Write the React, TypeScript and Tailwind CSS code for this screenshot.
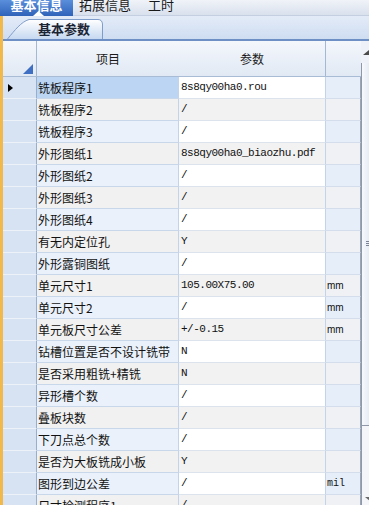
import type { ReactNode } from 'react'

type Row = { item: string; value: string; unit?: string }

const rows: Row[] = [
  { item: '铣板程序1', value: '8s8qy00ha0.rou' },
  { item: '铣板程序2', value: '/' },
  { item: '铣板程序3', value: '/' },
  { item: '外形图纸1', value: '8s8qy00ha0_biaozhu.pdf' },
  { item: '外形图纸2', value: '/' },
  { item: '外形图纸3', value: '/' },
  { item: '外形图纸4', value: '/' },
  { item: '有无内定位孔', value: 'Y' },
  { item: '外形露铜图纸', value: '/' },
  { item: '单元尺寸1', value: '105.00X75.00', unit: 'mm' },
  { item: '单元尺寸2', value: '/', unit: 'mm' },
  { item: '单元板尺寸公差', value: '+/-0.15', unit: 'mm' },
  { item: '钻槽位置是否不设计铣带', value: 'N' },
  { item: '是否采用粗铣+精铣', value: 'N' },
  { item: '异形槽个数', value: '/' },
  { item: '叠板块数', value: '/' },
  { item: '下刀点总个数', value: '/' },
  { item: '是否为大板铣成小板', value: 'Y' },
  { item: '图形到边公差', value: '/', unit: 'mil' },
  { item: '尺寸检测程序1', value: '/' },
]

const cjk = "font-['SimSun','Noto_Sans_CJK_SC',sans-serif]"
const mono = "font-['Liberation_Mono',monospace]"

function TopTab({ children, active }: { children: ReactNode; active?: boolean }) {
  if (active) {
    return (
      <div className="relative h-[16px] w-[73px] shrink-0 bg-gradient-to-b from-[#5a8fdc] to-[#2f63b9] flex justify-center">
        <span className="-mt-[2px] text-[13px] leading-[13px] font-bold text-white">{children}</span>
        <svg className="absolute left-[33px] top-[11px]" width="11" height="5" viewBox="0 0 11 5">
          <polygon points="0,5 5.5,0 11,5" fill="#ffffff" />
        </svg>
      </div>
    )
  }
  return (
    <div className="h-[16px] shrink-0 flex">
      <span className="-mt-[2px] text-[13px] leading-[13px] text-[#1a1a1a]">{children}</span>
    </div>
  )
}

export default function App() {
  return (
    <div className={`w-[369px] h-[505px] overflow-hidden bg-white ${cjk}`}>
      {/* top tab strip */}
      <div className="h-[16px] flex items-start bg-gradient-to-b from-[#f0f3f8] to-[#d9e1ed] border-b border-[#c4d0e2]">
        <TopTab active>基本信息</TopTab>
        <div className="w-[6px] shrink-0" />
        <TopTab>拓展信息</TopTab>
        <div className="w-[17px] shrink-0" />
        <TopTab>工时</TopTab>
      </div>

      <div className="border-l-[3px] border-[#f1b84a] h-[489px] flex flex-col">
        {/* sub tab strip */}
        <div className="h-[25px] shrink-0 flex items-end bg-gradient-to-b from-[#e3ebf7] to-[#cfddf2] border-b-2 border-[#6d8fc6]">
          <div className="relative ml-[4px] w-[97px] h-[21px]">
            <svg className="absolute inset-0" width="97" height="21" viewBox="0 0 97 21">
              <defs>
                <linearGradient id="tabg" x1="0" y1="0" x2="0" y2="1">
                  <stop offset="0" stopColor="#ffffff" />
                  <stop offset="1" stopColor="#c6d8f1" />
                </linearGradient>
              </defs>
              <path d="M0.5,21 C8,12 14,4 22,1.5 L91,1.5 Q95,1.5 95.5,6 L95.5,21" fill="url(#tabg)" stroke="#7f9dca" strokeWidth="1" />
            </svg>
            <span className="absolute left-[31px] top-[4px] text-[13px] leading-[14px] font-bold text-[#1b2433]">基本参数</span>
          </div>
        </div>

        <div className="flex flex-1 min-h-0">
          {/* grid */}
          <div className="w-[358px] flex flex-col">
            <div className="h-[36px] shrink-0 grid grid-cols-[34px_142px_147px_35px] bg-gradient-to-b from-[#f4f7fc] to-[#e1e9f4] border-b border-[#a9bcd6] text-[12px] text-[#1a1a1a]">
              <div className="relative border-r border-[#a5b8d3]">
                <svg className="absolute right-[3px] bottom-[2px]" width="10" height="10" viewBox="0 0 10 10">
                  <polygon points="10,0 10,10 0,10" fill="#3f6fc2" />
                </svg>
              </div>
              <div className="flex items-center justify-center">项目</div>
              <div className="flex items-center justify-center border-r border-[#a5b8d3]">参数</div>
              <div />
            </div>

            {rows.map((r, i) => {
              const even = i % 2 === 1
              const selected = i === 0
              return (
                <div key={r.item} className="h-[22px] shrink-0 grid grid-cols-[34px_142px_147px_35px]">
                  <div className="relative bg-[#d7e3f3] border-r border-[#98aecd] border-b border-b-[#edf2f9]">
                    {selected && (
                      <svg className="absolute left-[5px] top-[7px]" width="5" height="8" viewBox="0 0 5 8">
                        <polygon points="0,0 5,4 0,8" fill="#000000" />
                      </svg>
                    )}
                  </div>
                  <div
                    className={`flex items-center pl-[1px] text-[12px] text-[#111] border-r border-[#c3d3ea] border-b border-b-[#c9d7ea] whitespace-nowrap overflow-hidden ${
                      selected ? 'bg-[#bcd5f2]' : even ? 'bg-[#f1f1f1]' : 'bg-[#eaf1fb]'
                    }`}
                  >
                    {r.item}
                  </div>
                  <div
                    className={`flex items-center pl-[2px] text-[11px] tracking-[-0.5px] text-[#111] border-r border-[#c3d3ea] border-b border-b-[#dce3ed] whitespace-nowrap overflow-hidden ${mono} ${
                      even ? 'bg-[#f2f2f2]' : 'bg-white'
                    }`}
                  >
                    {r.value}
                  </div>
                  <div
                    className={`flex items-center pl-[1px] text-[10px] text-[#111] border-r border-[#9aa6b8] border-b border-b-[#d3ddeb] ${
                      r.unit === 'mil' ? mono : "font-['Liberation_Sans',sans-serif]"
                    } ${even ? 'bg-[#eff1f5]' : 'bg-[#e6eefa]'}`}
                  >
                    {r.unit}
                  </div>
                </div>
              )
            })}
          </div>

          {/* vertical scrollbar (cut off at the window edge) */}
          <div className="w-[8px] flex flex-col bg-[#eef2f8]">
            <div className="h-[22px] shrink-0 relative">
              <svg className="absolute left-[2px] top-[9px]" width="7" height="5" viewBox="0 0 7 5">
                <polygon points="0,5 6,0 7,5" fill="#4a4a4a" />
              </svg>
            </div>
            <div className="flex-1 relative border-l border-[#8e98a8] bg-[#f3f5f9]">
              <div className="absolute left-0 right-0 top-[0px] h-[363px] bg-gradient-to-r from-[#f7f9fc] to-[#e6ecf5] border-b border-[#8e98a8]">
                <div className="absolute left-[4px] top-[178px] w-[4px] flex flex-col gap-[1px]">
                  <div className="h-px bg-[#7a8496]" />
                  <div className="h-px bg-[#7a8496]" />
                  <div className="h-px bg-[#7a8496]" />
                </div>
              </div>
              <svg className="absolute left-[3px] bottom-[3px]" width="6" height="5" viewBox="0 0 6 5">
                <polygon points="0,0 6,0 6,5" fill="#6a6a6a" />
              </svg>
            </div>
          </div>
        </div>
      </div>
    </div>
  )
}
